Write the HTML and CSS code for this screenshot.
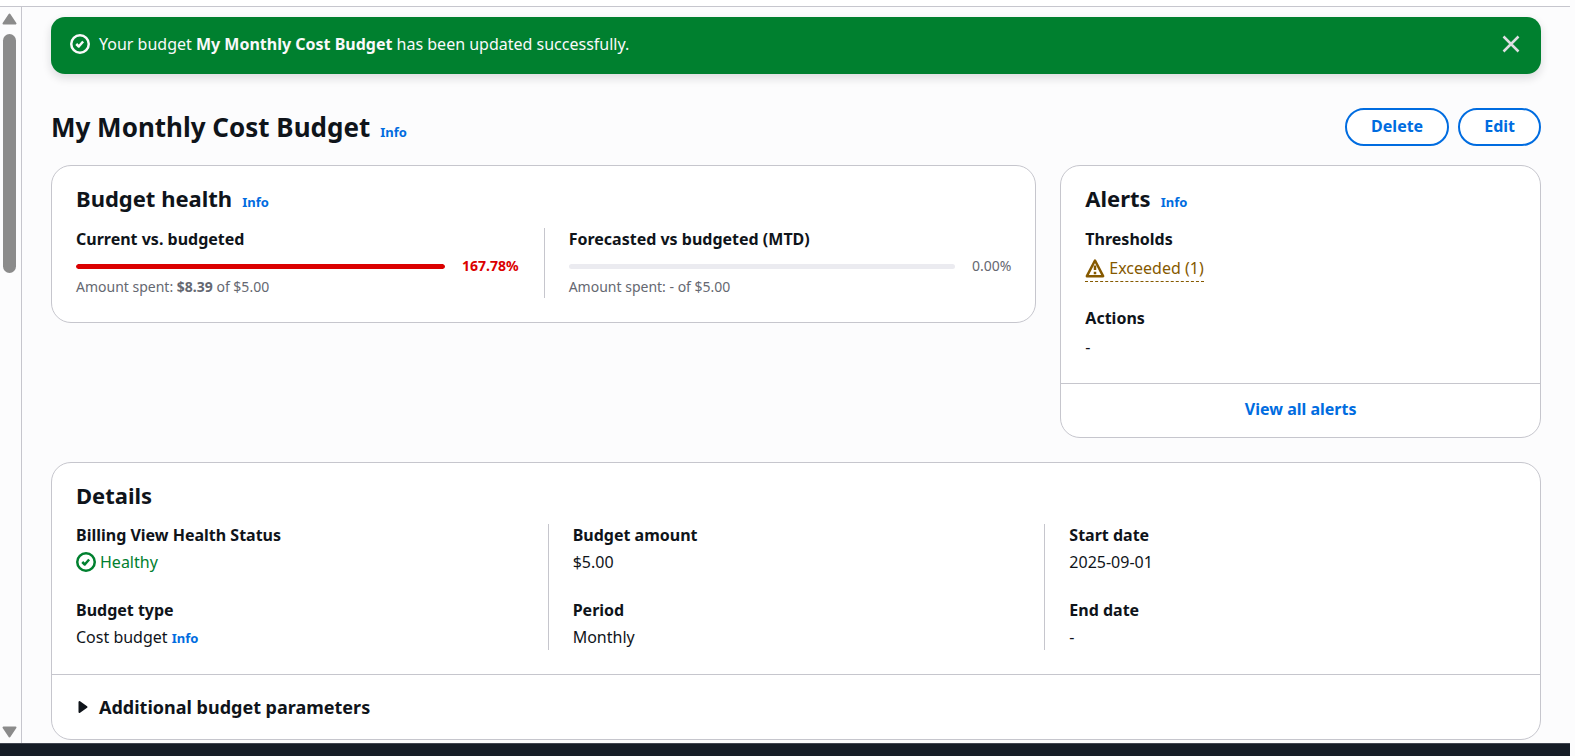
FILE: index.html
```html
<!DOCTYPE html>
<html lang="en">
<head>
<meta charset="utf-8">
<meta name="viewport" content="width=device-width, initial-scale=1">
<title>My Monthly Cost Budget</title>
<link rel="stylesheet" href="styles.css">
</head>
<body>
<div class="app">
  <div class="topbar"></div>
  <div class="shell">
    <div class="scroller" aria-hidden="true">
      <svg class="scroller-arrow" viewBox="0 0 14 12"><path d="M7 1.5 13 10.5H1Z" fill="#8b8b8b" stroke="#8b8b8b" stroke-width="2" stroke-linejoin="round"/></svg>
      <div class="scroller-track"><div class="scroller-thumb"></div></div>
      <svg class="scroller-arrow" viewBox="0 0 14 12"><path d="M1 1.5H13L7 10.5Z" fill="#8b8b8b" stroke="#8b8b8b" stroke-width="2" stroke-linejoin="round"/></svg>
    </div>
    <main class="content">
      <div class="flash" role="status">
        <svg class="icon" viewBox="0 0 16 16"><circle cx="8" cy="8" r="7"/><path d="m5 8 2 2 3.500-4"/></svg>
        <p class="flash-text">Your budget <b>My Monthly Cost Budget</b> has been updated successfully.</p>
        <button class="flash-close" type="button" aria-label="Dismiss">
          <svg class="icon" viewBox="0 0 16 16"><path d="m2 2 12 12M14 2 2 14"/></svg>
        </button>
      </div>

      <header class="page-header">
        <h1 class="page-title">My Monthly Cost Budget</h1>
        <a class="info" href="#">Info</a>
        <div class="actions">
          <button class="btn" type="button">Delete</button>
          <button class="btn" type="button">Edit</button>
        </div>
      </header>

      <div class="summary">
        <section class="card card-wide">
          <div class="card-body">
            <div class="card-header"><h2 class="card-title">Budget health</h2><a class="info" href="#">Info</a></div>
            <div class="columns">
              <div class="column">
                <h3 class="label">Current vs. budgeted</h3>
                <div class="progress">
                  <div class="bar"><div class="bar-fill" style="width:100%"></div></div>
                  <span class="percent percent-over">167.78%</span>
                </div>
                <p class="note">Amount spent: <b>$8.39</b> of $5.00</p>
              </div>
              <div class="column">
                <h3 class="label">Forecasted vs budgeted (MTD)</h3>
                <div class="progress">
                  <div class="bar"><div class="bar-fill" style="width:0%"></div></div>
                  <span class="percent">0.00%</span>
                </div>
                <p class="note">Amount spent: - of $5.00</p>
              </div>
            </div>
          </div>
        </section>

        <section class="card">
          <div class="card-body">
            <div class="card-header"><h2 class="card-title">Alerts</h2><a class="info" href="#">Info</a></div>
            <div class="stack alerts">
              <div>
                <h3 class="label">Thresholds</h3>
                <button class="status status-warning" type="button">
                  <svg class="icon" viewBox="0 0 16 16"><path d="M8 2 14.500 14.500H1.500Z"/><path d="M8 6v3.500M8 11v2"/></svg>Exceeded (1)</button>
              </div>
              <div>
                <h3 class="label">Actions</h3>
                <p class="value">-</p>
              </div>
            </div>
          </div>
          <div class="card-footer"><a class="link" href="#">View all alerts</a></div>
        </section>
      </div>

      <section class="card">
        <div class="card-body">
          <div class="card-header"><h2 class="card-title">Details</h2></div>
          <div class="columns">
            <div class="column stack">
              <div>
                <h3 class="label">Billing View Health Status</h3>
                <p class="value status status-success"><svg class="icon" viewBox="0 0 16 16"><circle cx="8" cy="8" r="7"/><path d="m5 8 2 2 3.500-4"/></svg>Healthy</p>
              </div>
              <div>
                <h3 class="label">Budget type</h3>
                <p class="value">Cost budget <a class="info" href="#">Info</a></p>
              </div>
            </div>
            <div class="column stack">
              <div><h3 class="label">Budget amount</h3><p class="value">$5.00</p></div>
              <div><h3 class="label">Period</h3><p class="value">Monthly</p></div>
            </div>
            <div class="column stack">
              <div><h3 class="label">Start date</h3><p class="value">2025-09-01</p></div>
              <div><h3 class="label">End date</h3><p class="value">-</p></div>
            </div>
          </div>
        </div>
        <button class="expander" type="button" aria-expanded="false">
          <svg class="caret" viewBox="0 0 12 14"><path d="M3 2v10l7-5Z"/></svg>Additional budget parameters
        </button>
      </section>
    </main>
  </div>
  <footer class="bottombar"></footer>
</div>
</body>
</html>
```
FILE: styles.css
```css
* { box-sizing: border-box; }

body {
  margin: 0;
  background: #fcfcfd;
  color: #0f141a;
  font-family: "Noto Sans", "Open Sans", sans-serif;
  font-size: 16px;
  line-height: 24px;
}

h1, h2, h3, p { margin: 0; }
button { font: inherit; color: inherit; cursor: pointer; }
a { color: #006ce0; text-decoration: none; }

.app { display: flex; flex-direction: column; min-height: 100vh; }
.topbar { height: 7px; margin-right: 5px; background: #fff; border-bottom: 1px solid #c6c6cd; }
.bottombar { height: 13px; margin-right: 5px; background: #161d26; border-top: 1px solid #424650; }
.shell { display: flex; flex: 1; }

.scroller {
  display: flex;
  flex-direction: column;
  align-items: center;
  gap: 9px;
  width: 22px;
  padding: 6px 2px 5px 0;
  border-right: 1px solid #c6c6cd;
}
.scroller-arrow { width: 15px; height: 12px; }
.scroller-track { flex: 1; width: 13px; }
.scroller-thumb { height: 35%; border-radius: 7px; background: #8b8b8b; }

.content { flex: 1; min-width: 0; padding: 10px 34px 3px 29px; }

.icon {
  flex: none;
  width: 20px;
  height: 20px;
  fill: none;
  stroke: currentColor;
  stroke-width: 2;
  stroke-linejoin: round;
}

.flash {
  display: flex;
  align-items: center;
  gap: 9px;
  min-height: 57px;
  padding: 0 20px 3px 19px;
  border-radius: 14px;
  background: #00802f;
  color: #f9f9fa;
  box-shadow: 0 4px 10px rgba(15, 20, 26, 0.14);
}
.flash-text { flex: 1; }
.flash-close { display: flex; padding: 0; border: 0; background: none; color: #dedee3; }

.page-header { display: flex; align-items: baseline; gap: 10px; padding: 34px 0 19px; }
.page-title { font-size: 26px; line-height: 38px; }
.actions { display: flex; align-self: center; gap: 9px; margin-left: auto; }
.btn {
  height: 38px;
  padding: 0 24px 2px;
  border: 2px solid #006ce0;
  border-radius: 20px;
  background: #fff;
  color: #006ce0;
  font-weight: 700;
  line-height: 22px;
}

.info { font-size: 13px; font-weight: 700; }
.link { font-weight: 700; }

.summary { display: grid; grid-template-columns: repeat(3, 1fr); align-items: start; gap: 24px; margin-bottom: 24px; }
.card { border: 1px solid #c6c6cd; border-radius: 20px; background: #fff; }
.card-wide { grid-column: span 2; }
.card-body { padding: 17px 24px 24px; }
.card-header { display: flex; align-items: baseline; gap: 10px; margin-bottom: 14px; }
.card-title { font-size: 22px; line-height: 30px; }
.card-footer { padding: 13px 24px 16px; border-top: 1px solid #c6c6cd; text-align: center; }

.columns { display: flex; gap: 25px; }
.column { flex: 1; min-width: 0; }
.column + .column { padding-left: 24px; border-left: 1px solid #c6c6cd; }
.stack { display: flex; flex-direction: column; gap: 25px; }

.label { margin-bottom: 4px; font-size: 16px; line-height: 22px; }
.alerts .label { margin-bottom: 6px; }

.status { display: flex; align-items: center; gap: 4px; }
.status-success { color: #00802f; }
.status-warning { padding: 0 0 1px; border: 0; border-bottom: 1px dashed #855900; background: none; color: #855900; }

.progress { display: flex; align-items: center; gap: 17px; padding-top: 2px; line-height: 20px; }
.bar { flex: 1; height: 5px; border-radius: 3px; background: #ebebf0; overflow: hidden; }
.bar-fill { height: 100%; border-radius: 3px; background: #db0000; }
.percent { color: #656871; font-size: 14px; }
.percent-over { color: #db0000; font-weight: 700; }
.note { color: #656871; font-size: 14px; line-height: 22px; }

.expander {
  display: flex;
  align-items: center;
  gap: 10px;
  width: 100%;
  padding: 20px 24px;
  border: 0;
  border-top: 1px solid #c6c6cd;
  border-radius: 0 0 20px 20px;
  background: none;
  font-size: 18px;
  font-weight: 700;
  text-align: left;
}
.caret { width: 13px; height: 14px; fill: currentColor; stroke: currentColor; stroke-width: 2; stroke-linejoin: round; }
```
